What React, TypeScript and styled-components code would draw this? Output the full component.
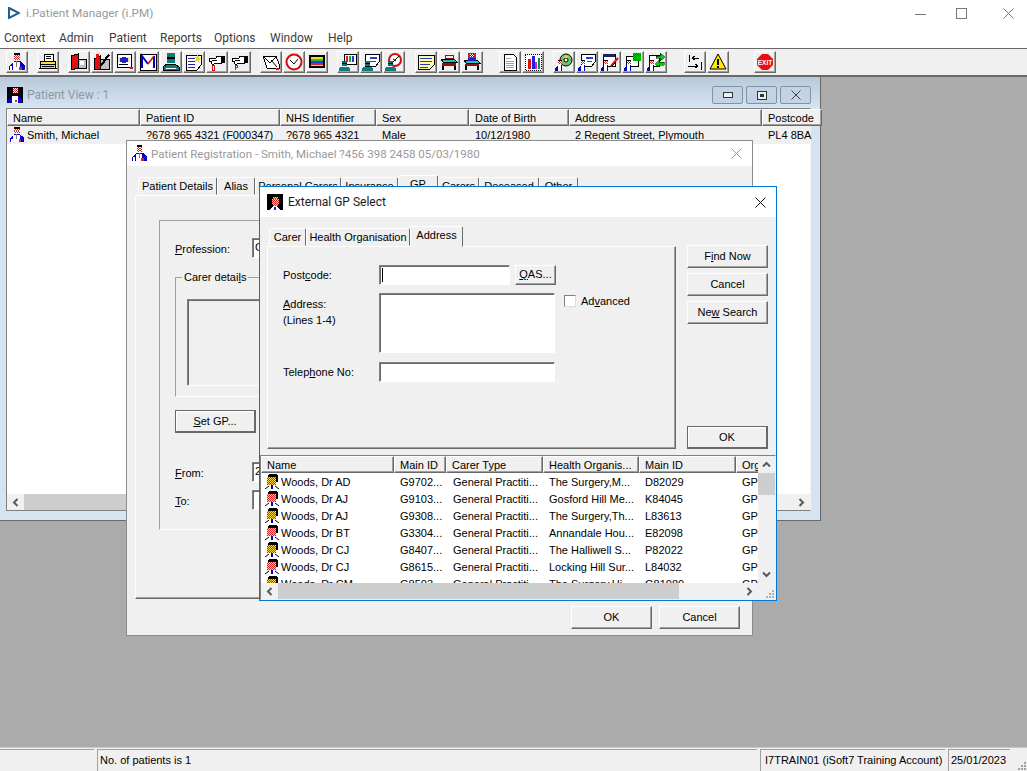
import React from 'react'
import styled, {createGlobalStyle, css} from 'styled-components'

const GlobalStyle = createGlobalStyle`
  html, body { margin: 0; padding: 0; background: #ababab; }
  * { box-sizing: border-box; }
`

const dlgFont = `'Liberation Sans', Arial, sans-serif`
const capFont = `Roboto, 'Noto Sans', sans-serif`

const raised = css`
  border: 1px solid;
  border-color: #fff #696969 #696969 #fff;
  box-shadow: inset -1px -1px 0 #a0a0a0;
`
const sunken = css`
  border: 1px solid;
  border-color: #808080 #fff #fff #808080;
  box-shadow: inset 1px 1px 0 #696969;
`

const Screen = styled.div`
  width: 1027px;
  height: 771px;
  display: flex;
  flex-direction: column;
  overflow: hidden;
  font-family: ${dlgFont};
  font-size: 11px;
  color: #000;
`

/* top of the main window */
const AppTitle = styled.div`
  height: 28px;
  flex: none;
  background: #fff;
  display: flex;
  align-items: center;
  padding: 0 0 2px 8px;
`
const AppTitleText = styled.span`
  margin-left: 6px;
  font-family: ${capFont};
  font-size: 11.8px;
  color: #999;
  flex: 1;
`
const WinButtons = styled.div`
  display: flex;
  width: 112px;
`
const WinGlyph = styled.div<{$left: number}>`
  margin-left: ${({$left}) => $left}px;
  height: 11px;
`
const MenuBar = styled.div`
  height: 20px;
  flex: none;
  background: #fff;
  display: flex;
  align-items: center;
  padding-left: 4px;
`
const MenuItem = styled.span<{$w: number}>`
  width: ${({$w}) => $w}px;
  font-family: ${capFont};
  font-size: 12px;
  color: #3c3c3c;
`
const Toolbar = styled.div`
  height: 29px;
  flex: none;
  display: flex;
  align-items: flex-start;
  padding: 2px 0 0 6px;
  background: #f0f0f0;
  border-top: 1px solid #696969;
  border-bottom: 2px solid #696969;
`
const ToolGroup = styled.div<{$gap: number}>`
  display: flex;
  gap: 1px;
  margin-left: ${({$gap}) => $gap}px;
`
const ToolButton = styled.div`
  width: 22px;
  height: 22px;
  ${raised}
  display: flex;
  align-items: center;
  justify-content: center;
`

const Desktop = styled.div`
  flex: 1;
  position: relative;
  background: #ababab;
`

/* mdi child */
const PatientWindow = styled.div`
  position: absolute;
  left: 0;
  top: 0;
  width: 821px;
  height: 444px;
  display: flex;
  flex-direction: column;
  padding: 0 9px 9px 6px;
  background: #d6e4f2;
  border-right: 1px solid #696969;
  border-bottom: 1px solid #696969;
`
const PatientCaption = styled.div`
  height: 31px;
  flex: none;
  margin: 0 -9px 0 -6px;
  padding: 5px 9px 0 7px;
  background: linear-gradient(to bottom, #b7c9da, #d7e4f2);
  display: flex;
  align-items: center;
  gap: 3px;
`
const PatientTitle = styled.span`
  flex: 1;
  margin-left: 1px;
  font-family: ${capFont};
  font-size: 12px;
  color: #8a99a6;
`
const MdiButton = styled.div`
  width: 31px;
  height: 18px;
  background: #c4d3e3;
  border: 1px solid #8193a9;
  border-radius: 2px;
  display: flex;
  align-items: center;
  justify-content: center;
`
const ListFrame = styled.div`
  flex: 1;
  min-height: 0;
  display: flex;
  flex-direction: column;
  background: #fff;
  border: 1px solid #808080;
  border-right-color: #f0f0f0;
`
const HeaderRow = styled.div<{$cols: string}>`
  display: grid;
  grid-template-columns: ${({$cols}) => $cols};
  height: 17px;
  flex: none;
`
const HeaderCell = styled.div`
  ${raised}
  background: #f0f0f0;
  padding-left: 5px;
  line-height: 16px;
  white-space: nowrap;
  overflow: hidden;
`
const DataRow = styled.div<{$cols: string; $h: number; $selected?: boolean}>`
  display: grid;
  grid-template-columns: ${({$cols}) => $cols};
  height: ${({$h}) => $h}px;
  flex: none;
  background: ${({$selected}) => ($selected ? '#f0f0f0' : '#fff')};
`
const DataCell = styled.div<{$pad?: number; $gap?: number}>`
  display: flex;
  align-items: center;
  gap: ${({$gap}) => $gap ?? 2}px;
  padding-left: ${({$pad}) => $pad ?? 6}px;
  white-space: nowrap;
  overflow: hidden;
`
const ListFill = styled.div`
  flex: 1;
  min-height: 0;
`
const HScroll = styled.div`
  height: 16px;
  flex: none;
  display: flex;
  align-items: stretch;
  background: #f0f0f0;
`
const ScrollArrow = styled.div<{$end?: boolean}>`
  width: 17px;
  flex: none;
  display: flex;
  align-items: center;
  justify-content: center;
  margin-left: ${({$end}) => ($end ? 'auto' : 0)};
`
const HThumb = styled.div<{$w: number}>`
  width: ${({$w}) => $w}px;
  background: #cdcdcd;
`

/* common dialog parts */
const Dialog = styled.div<{$x: number; $y: number; $w: number; $h: number; $active?: boolean}>`
  position: absolute;
  isolation: isolate;
  left: ${({$x}) => $x}px;
  top: ${({$y}) => $y}px;
  width: ${({$w}) => $w}px;
  height: ${({$h}) => $h}px;
  display: flex;
  flex-direction: column;
  background: #f0f0f0;
  border: 1px solid ${({$active}) => ($active ? '#0078d7' : '#8c8c8c')};
`
const Caption = styled.div<{$h: number; $left: number}>`
  height: ${({$h}) => $h}px;
  flex: none;
  background: #fff;
  display: flex;
  align-items: center;
  padding: 0 10px 0 ${({$left}) => $left}px;
`
const CaptionText = styled.span<{$active?: boolean}>`
  flex: 1;
  margin-left: ${({$active}) => ($active ? 5 : 3)}px;
  font-family: ${capFont};
  font-size: ${({$active}) => ($active ? 12 : 11.55)}px;
  color: ${({$active}) => ($active ? '#1a1a1a' : '#999')};
  white-space: nowrap;
`
const TabStrip = styled.div<{$left: number}>`
  display: flex;
  align-items: flex-end;
  padding-left: ${({$left}) => $left}px;
  position: relative;
  z-index: 1;
`
const Tab = styled.div<{$w: number; $active?: boolean}>`
  width: ${({$w}) => $w}px;
  height: ${({$active}) => ($active ? 21 : 18)}px;
  margin-bottom: ${({$active}) => ($active ? -1 : 0)}px;
  background: #f0f0f0;
  border: 1px solid;
  border-color: #fff #696969 transparent #fff;
  border-radius: 2px 2px 0 0;
  text-align: center;
  line-height: ${({$active}) => ($active ? 16 : 17)}px;
  white-space: nowrap;
`
const TabPanel = styled.div`
  ${raised}
  border-top-color: #fff;
`
const Button = styled.div<{$w?: number; $h?: number; $default?: boolean}>`
  width: ${({$w}) => $w ?? 81}px;
  height: ${({$h}) => $h ?? 23}px;
  flex: none;
  background: #f0f0f0;
  display: flex;
  align-items: center;
  justify-content: center;
  padding-bottom: 2px;
  ${raised}
  ${({$default}) =>
    $default &&
    css`
      padding-bottom: 0;
      border-color: #696969;
      border-bottom-width: 2px;
      border-right-width: 2px;
      box-shadow: inset 1px 1px 0 #fff;
    `}
`
const Field = styled.div<{$w: number; $h?: number}>`
  width: ${({$w}) => $w}px;
  height: ${({$h}) => $h ?? 20}px;
  flex: none;
  background: #fff;
  padding: 2px 0 0 2px;
  overflow: hidden;
  ${sunken}
`
const Caret = styled.div`
  width: 1px;
  height: 14px;
  background: #000;
`

/* patient registration */
const RegBody = styled.div`
  flex: 1;
  display: flex;
  flex-direction: column;
  padding: 9px 8px 5px 8px;
  min-height: 0;
`
const RegPanel = styled(TabPanel)`
  height: 404px;
  flex: none;
  padding: 24px 23px 0 23px;
`
const GpGroup = styled.div`
  height: 310px;
  border: 1px solid;
  border-color: #a0a0a0 #fff #fff #a0a0a0;
  padding: 17px 16px 0 15px;
`
const GpRow = styled.div<{$top?: number}>`
  display: flex;
  align-items: center;
  margin-top: ${({$top}) => $top ?? 0}px;
`
const GpLabel = styled.div`
  width: 77px;
  padding-top: 2px;
`
const CarerBox = styled.div`
  position: relative;
  height: 120px;
  margin-top: 19px;
  padding: 21px 30px 0 11px;
  border: 1px solid;
  border-color: #a0a0a0 #fff #fff #a0a0a0;
`
const CarerLegend = styled.span`
  position: absolute;
  top: -7px;
  left: 6px;
  padding: 0 2px;
  background: #f0f0f0;
`
const CarerList = styled.div`
  height: 87px;
  ${sunken}
`
const RegFooter = styled.div`
  display: flex;
  justify-content: flex-end;
  gap: 7px;
  padding: 7px 4px 0 0;
`

/* external gp */
const GpBody = styled.div`
  display: grid;
  grid-template-columns: 409px 81px;
  column-gap: 11px;
  padding: 9px 0 0 7px;
  height: 238px;
  flex: none;
`
const GpTabs = styled.div`
  display: flex;
  flex-direction: column;
  height: 223px;
`
const AddressPanel = styled(TabPanel)`
  flex: 1;
  display: grid;
  grid-template-columns: 96px 176px auto;
  grid-template-rows: 20px 61px 20px;
  row-gap: 8px;
  align-items: start;
  padding: 18px 0 0 15px;
`
const FormLabel = styled.div<{$center?: boolean}>`
  line-height: 16px;
  padding-top: ${({$center}) => ($center ? 2 : 3)}px;
`
const InlineFields = styled.div`
  display: flex;
  gap: 5px;
`
const CheckWrap = styled.div`
  display: flex;
  align-items: center;
  gap: 5px;
  margin: 2px 0 0 9px;
`
const CheckBox = styled.div`
  width: 12px;
  height: 12px;
  background: #fff;
  border: 1px solid;
  border-color: #808080 #ddd #ddd #808080;
`
const SideButtons = styled.div`
  display: flex;
  flex-direction: column;
  gap: 5px;
  padding-top: 19px;
  height: 223px;
`
const SideOk = styled(Button)`
  margin-top: auto;
`
const GpList = styled.div`
  flex: 1;
  min-height: 0;
  display: flex;
  flex-direction: column;
  border: 1px solid #808080;
  border-right-color: #f0f0f0;
  border-bottom-color: #f0f0f0;
  background: #fff;
`
const GpListMain = styled.div`
  flex: 1;
  min-height: 0;
  display: flex;
`
const GpListRows = styled.div`
  flex: 1;
  min-width: 0;
  overflow: hidden;
`
const VScroll = styled.div`
  width: 17px;
  flex: none;
  display: flex;
  flex-direction: column;
  background: #f0f0f0;
`
const VArrow = styled.div<{$end?: boolean}>`
  height: 17px;
  flex: none;
  display: flex;
  align-items: center;
  justify-content: center;
  margin-top: ${({$end}) => ($end ? 'auto' : 0)};
`
const VThumb = styled.div`
  height: 22px;
  background: #cdcdcd;
`
const Grip = styled.div`
  margin-left: 1px;
  width: 16px;
  display: flex;
  align-items: flex-end;
  justify-content: flex-end;
`

/* bottom bar */
const StatusBar = styled.div`
  height: 24px;
  flex: none;
  display: flex;
  gap: 3px;
  margin-left: -1px;
  background: #f0f0f0;
  padding-top: 1px;
  border-top: 1px solid #c8c8c8;
`
const StatusCell = styled.div<{$w: number; $pad?: number}>`
  width: ${({$w}) => $w}px;
  flex: none;
  border-top: 1px solid #a0a0a0;
  border-left: 1px solid #a0a0a0;
  padding: 4px 0 0 ${({$pad}) => $pad ?? 2}px;
  white-space: nowrap;
  overflow: hidden;
`
const StatusGrip = styled.div`
  flex: 1;
  display: flex;
  align-items: flex-end;
  justify-content: flex-end;
`

const Checker = ({x, y, n, m, a, b, s = 1}: {x: number; y: number; n: number; m: number; a: string; b: string; s?: number}) => (
  <>
    {Array.from({length: n * m}).map((_, i) => (
      <rect
        key={i}
        x={x + (i % n) * s}
        y={y + Math.floor(i / n) * s}
        width={s}
        height={s}
        fill={((i % n) + Math.floor(i / n)) % 2 ? a : b}
      />
    ))}
  </>
)

const Svg = ({size = 18, box = 18, children}: {size?: number; box?: number; children: React.ReactNode}) => (
  <svg width={size} height={size} viewBox={`0 0 ${box} ${box}`} shapeRendering="crispEdges" style={{display: 'block', flex: 'none'}}>
    {children}
  </svg>
)

// small patient figure, sits bottom left on a lot of the toolbar icons
const Patient = ({x = 0, y = 0}: {x?: number; y?: number}) => (
  <g transform={`translate(${x} ${y})`}>
    <rect x={3} y={0} width={4} height={1} fill="#000" />
    <Checker x={3} y={1} n={4} m={3} a="#e02020" b="#fff" />
    <path d="M0 11V8L3 5H7V11Z" fill="#0000c0" />
    <rect x={3} y={5} width={3} height={6} fill="#fff" />
  </g>
)

const Teal = ({x = 0, y = 0}: {x?: number; y?: number}) => (
  <g transform={`translate(${x} ${y})`}>
    <rect x={3} y={0} width={5} height={5} fill="#0f6f6f" />
    <rect x={3} y={2} width={5} height={1} fill="#000" />
    <path d="M0 10V7L2 6H9L11 7V10Z" fill="#0f7c7c" />
  </g>
)

const PatientIcon = ({size = 18}: {size?: number}) => (
  <Svg size={size}>
    <rect x={6} y={0} width={6} height={2} fill="#000" />
    <Checker x={6} y={2} n={6} m={5} a="#e02020" b="#fff" />
    <path d="M1 17V13L6 8H12L17 12V17Z" fill="#0000c8" />
    <path d="M5 9H12V17H5Z" fill="#fff" />
    <rect x={2} y={13} width={2} height={4} fill="#fff" />
    <rect x={11} y={14} width={3} height={3} fill="#e02020" />
    <rect x={8} y={8} width={1} height={6} fill="#808080" />
  </Svg>
)

const WindowPatientIcon = () => (
  <Svg size={16} box={16}>
    <rect width={16} height={16} fill="#000" />
    <Checker x={6} y={1} n={5} m={5} a="#e02020" b="#fff" />
    <path d="M1 16V13L5 9H11L15 13V16Z" fill="#0000c8" />
    <path d="M5 9H11V16H5Z" fill="#fff" />
    <rect x={8} y={13} width={2} height={2} fill="#e02020" />
  </Svg>
)

const GpWindowIcon = () => (
  <Svg size={16} box={16}>
    <rect width={16} height={16} fill="#000" />
    <Checker x={6} y={3} n={5} m={2} a="#e02020" b="#ffd040" />
    <Checker x={5} y={5} n={7} m={5} a="#e02020" b="#ffd040" />
    <Checker x={6} y={10} n={5} m={2} a="#e02020" b="#ffd040" />
    <path d="M3 16L6 12H10L13 16Z" fill="#fff" />
    <rect x={7} y={13} width={2} height={3} fill="#2020a0" />
  </Svg>
)

const GpPersonIcon = () => (
  <Svg size={15} box={15}>
    <path d="M3 1L5 0H11L13 2V8H11V3H4V4H3Z" fill="#000" />
    <Checker x={2} y={3} n={9} m={8} a="#e02020" b="#ffd840" />
    <path d="M0 15L4 12M14 15L10 12" stroke="#000" fill="none" shapeRendering="auto" />
    <rect x={6} y={11} width={2} height={4} fill="#0000d0" />
  </Svg>
)

const BookIcon = () => (
  <Svg>
    <path d="M1 3L8 1V15L1 17Z" fill="#e01010" stroke="#000" />
    <path d="M8 6H16V15H8Z" fill="#c0c0c0" stroke="#000" />
    <rect x={10} y={8} width={4} height={4} fill="#fff" />
  </Svg>
)

const Hand = () => (
  <>
    <path d="M1 5H8L9 3H13V10H8L6 11H4L3 8H1Z" fill="#fff" stroke="#000" />
    <path d="M4 7H9" stroke="#000" />
    <rect x={13} y={3} width={4} height={7} fill="#000" />
  </>
)

const icons: Record<string, React.ReactNode> = {
  patient: <PatientIcon />,
  typewriter: (
    <Svg>
      <rect x={5} y={1} width={9} height={8} fill="#fff" stroke="#000" />
      <rect x={7} y={3} width={5} height={1} fill="#000" />
      <rect x={7} y={5} width={5} height={1} fill="#000" />
      <path d="M2 8H16L17 15H1Z" fill="#f4e040" stroke="#000" />
      <rect x={2} y={11} width={14} height={1} fill="#000" />
      <rect x={3} y={13} width={12} height={1} fill="#000" />
    </Svg>
  ),
  book: <BookIcon />,
  notebook: (
    <Svg>
      <path d="M1 6L7 3V16L1 17Z" fill="#e01010" stroke="#000" />
      <path d="M7 6H16V16H7Z" fill="#c0c0c0" stroke="#000" />
      <path d="M7 12L15 1L17 2L9 13Z" fill="#000" />
      <rect x={3} y={1} width={3} height={4} fill="#e01010" />
    </Svg>
  ),
  eyecard: (
    <Svg>
      <rect x={1} y={1} width={14} height={13} fill="#fff" stroke="#000" />
      <rect x={2} y={4} width={12} height={5} fill="#e8e8a0" />
      <ellipse cx={8} cy={7} rx={4} ry={3} fill="#2020c0" />
      <rect x={3} y={11} width={9} height={1} fill="#000" />
      <rect x={14} y={14} width={3} height={2} fill="#e01010" />
    </Svg>
  ),
  mail: (
    <Svg>
      <rect x={1} y={1} width={16} height={16} fill="#fff" stroke="#000" />
      <path d="M3 15V3L9 11" fill="none" stroke="#0000d0" strokeWidth={2} shapeRendering="auto" />
      <path d="M15 3V15" fill="none" stroke="#0000d0" strokeWidth={2} />
      <path d="M9 11L15 3" stroke="#e01010" strokeWidth={1.5} shapeRendering="auto" />
    </Svg>
  ),
  surgeon: (
    <Svg>
      <rect x={5} y={0} width={8} height={4} fill="#0f7c7c" />
      <rect x={5} y={4} width={8} height={2} fill="#000" />
      <rect x={5} y={6} width={8} height={4} fill="#0f7c7c" />
      <path d="M1 17V14L5 11H13L17 14V17Z" fill="#0f7c7c" stroke="#000" />
      <rect x={4} y={15} width={10} height={1} fill="#fff" />
    </Svg>
  ),
  starnote: (
    <Svg>
      <path d="M1 2H16V12L12 17H1Z" fill="#fff" stroke="#000" />
      <path d="M3 5H10M3 8H10M3 11H10M3 14H10" stroke="#2020c0" />
      <path d="M13 1L14 5H17L14 7L15 10L12 8L10 9L11 6L9 4H12Z" fill="#f4d020" />
    </Svg>
  ),
  handD: (
    <Svg>
      <Hand />
      <path d="M4 12V17M4 12H6V17H4" fill="none" stroke="#e01010" />
    </Svg>
  ),
  handP: (
    <Svg>
      <Hand />
      <path d="M4 17V12H6V14H4" fill="none" stroke="#e01010" />
    </Svg>
  ),
  envelope: (
    <Svg>
      <path d="M1 3H14L17 11V15H5Z" fill="#fff" stroke="#000" />
      <path d="M2 4L8 10L14 4M9 7L15 14" fill="none" stroke="#000" shapeRendering="auto" />
      <rect x={14} y={15} width={3} height={2} fill="#e01010" />
    </Svg>
  ),
  clock: (
    <Svg>
      <circle cx={9} cy={9} r={7.5} fill="#fff" stroke="#d01010" strokeWidth={2} shapeRendering="auto" />
      <path d="M5 7L9 11L13 6" fill="none" stroke="#000" shapeRendering="auto" />
    </Svg>
  ),
  rainbow: (
    <Svg>
      <rect x={1} y={2} width={16} height={13} fill="#000" />
      <rect x={3} y={4} width={12} height={2} fill="#f4e020" />
      <rect x={3} y={6} width={12} height={2} fill="#20c040" />
      <rect x={3} y={8} width={12} height={2} fill="#2040e0" />
      <rect x={3} y={10} width={12} height={2} fill="#e02020" />
      <rect x={3} y={12} width={12} height={1} fill="#f4e020" />
    </Svg>
  ),
  monitor: (
    <Svg>
      <rect x={5} y={1} width={12} height={10} fill="#fff" stroke="#000" />
      <rect x={7} y={3} width={2} height={6} fill="#e02020" />
      <rect x={10} y={3} width={2} height={6} fill="#20a040" />
      <rect x={13} y={3} width={2} height={6} fill="#2040e0" />
      <Teal x={0} y={8} />
    </Svg>
  ),
  form: (
    <Svg>
      <path d="M3 1H17V9L14 13H3Z" fill="#fff" stroke="#000" />
      <rect x={8} y={4} width={7} height={2} fill="#2040e0" />
      <rect x={8} y={8} width={6} height={1} fill="#2040e0" />
      <Teal x={0} y={8} />
    </Svg>
  ),
  noclock: (
    <Svg>
      <circle cx={10} cy={7} r={6} fill="#fff" stroke="#d01010" strokeWidth={2} shapeRendering="auto" />
      <path d="M6 11L14 3M8 6L11 8" stroke="#000" shapeRendering="auto" />
      <Teal x={0} y={8} />
    </Svg>
  ),
  yellownote: (
    <Svg>
      <path d="M1 2H17V12L13 16H1Z" fill="#fff8a0" stroke="#000" />
      <path d="M3 5H15M3 8H15M3 11H13M3 14H11" stroke="#2040c0" />
    </Svg>
  ),
  bed: (
    <Svg>
      <path d="M5 2H13V5H5Z" fill="none" stroke="#901010" />
      <path d="M1 6H14L17 9H3Z" fill="#20c0c0" stroke="#000" />
      <rect x={2} y={10} width={14} height={3} fill="#901010" />
      <rect x={2} y={13} width={2} height={4} fill="#000" />
      <rect x={14} y={13} width={2} height={4} fill="#000" />
    </Svg>
  ),
  bedperson: (
    <Svg>
      <rect x={5} y={0} width={8} height={5} fill="#d02020" />
      <Checker x={7} y={1} n={4} m={3} a="#2020c0" b="#fff" />
      <path d="M1 7H14L17 10H3Z" fill="#20c0c0" stroke="#000" />
      <rect x={5} y={5} width={8} height={3} fill="#2020c0" />
      <rect x={2} y={11} width={14} height={2} fill="#901010" />
      <rect x={2} y={13} width={2} height={4} fill="#000" />
      <rect x={14} y={13} width={2} height={4} fill="#000" />
    </Svg>
  ),
  document: (
    <Svg>
      <path d="M3 1H12L15 4V17H3Z" fill="#fff" stroke="#000" />
      <path d="M5 5H10M5 8H13M5 10H13M5 12H13M5 14H13" stroke="#a0a0a0" />
    </Svg>
  ),
  chart: (
    <Svg>
      <rect x={1} y={1} width={16} height={16} fill="#fff" stroke="#000" strokeDasharray="1 1" />
      <rect x={4} y={6} width={3} height={10} fill="#e01010" />
      <rect x={8} y={3} width={3} height={13} fill="#2020e0" />
      <rect x={11} y={9} width={2} height={7} fill="#e020c0" />
      <rect x={14} y={5} width={2} height={11} fill="#109040" />
    </Svg>
  ),
  disc: (
    <Svg>
      <circle cx={11} cy={7} r={6} fill="#70c070" stroke="#000" shapeRendering="auto" />
      <circle cx={11} cy={7} r={2} fill="#fff" stroke="#000" shapeRendering="auto" />
      <path d="M11 1L14 5H8Z" fill="#e0d040" />
      <Patient x={0} y={7} />
    </Svg>
  ),
  patientform: (
    <Svg>
      <path d="M3 1H17V9L14 13H3Z" fill="#fff" stroke="#000" />
      <rect x={8} y={4} width={7} height={2} fill="#2040e0" />
      <rect x={9} y={8} width={5} height={1} fill="#2040e0" />
      <Patient x={0} y={7} />
    </Svg>
  ),
  patientsign: (
    <Svg>
      <rect x={2} y={1} width={12} height={12} fill="#fff" stroke="#000" />
      <rect x={2} y={1} width={12} height={3} fill="#202060" />
      <path d="M10 13L17 5" stroke="#e01010" strokeWidth={2} shapeRendering="auto" />
      <path d="M11 13L15 9" stroke="#000" />
      <Patient x={0} y={7} />
    </Svg>
  ),
  patientglobe: (
    <Svg>
      <rect x={2} y={3} width={12} height={10} fill="#fff" stroke="#000" />
      <Checker x={9} y={0} n={8} m={8} a="#008000" b="#00d000" />
      <Patient x={0} y={7} />
    </Svg>
  ),
  patientarrows: (
    <Svg>
      <rect x={2} y={2} width={10} height={11} fill="#fff" stroke="#000" />
      <path d="M9 3H13V0L18 4L13 8V5H9Z" fill="#00d000" stroke="#000" strokeWidth={0.5} />
      <path d="M17 9H12V7L8 11L12 14V12H17Z" fill="#00d000" stroke="#000" strokeWidth={0.5} />
      <Patient x={0} y={7} />
    </Svg>
  ),
  transfer: (
    <Svg>
      <path d="M3 2V9M13 5H6M6 5L9 3M6 5L9 7" fill="none" stroke="#000" />
      <path d="M15 9V17M2 13H12M12 13L9 11M12 13L9 15" fill="none" stroke="#000" />
    </Svg>
  ),
  warning: (
    <Svg>
      <path d="M9 1L17 16H1Z" fill="#ffe800" stroke="#000" shapeRendering="auto" />
      <rect x={8} y={6} width={2} height={6} fill="#000" />
      <rect x={8} y={13} width={2} height={2} fill="#000" />
    </Svg>
  ),
  exit: (
    <Svg>
      <path d="M6 1H12L17 6V12L12 17H6L1 12V6Z" fill="#e81010" shapeRendering="auto" />
      <text x={9} y={11.5} textAnchor="middle" fontSize={6.5} fontWeight={700} fontFamily="'Liberation Sans', sans-serif" fill="#fff">
        EXIT
      </text>
    </Svg>
  ),
}

const toolGroups = [
  {gap: 0, items: ['patient']},
  {gap: 9, items: ['typewriter']},
  {gap: 9, items: ['book', 'notebook', 'eyecard', 'mail', 'surgeon', 'starnote', 'handD', 'handP']},
  {gap: 9, items: ['envelope', 'clock', 'rainbow']},
  {gap: 9, items: ['monitor', 'form', 'noclock']},
  {gap: 10, items: ['yellownote', 'bed', 'bedperson']},
  {gap: 16, items: ['document', 'chart']},
  {gap: 9, items: ['disc', 'patientform', 'patientsign', 'patientglobe', 'patientarrows']},
  {gap: 17, items: ['transfer', 'warning']},
  {gap: 25, items: ['exit']},
]

const menus: [string, number][] = [
  ['Context', 55],
  ['Admin', 50],
  ['Patient', 51],
  ['Reports', 54],
  ['Options', 56],
  ['Window', 58],
  ['Help', 40],
]

const patientCols = '133px 140px 96px 93px 100px 193px 60px'
const patientHeads = ['Name', 'Patient ID', 'NHS Identifier', 'Sex', 'Date of Birth', 'Address', 'Postcode']
const patientCells = ['?678 965 4321 (F000347)', '?678 965 4321', 'Male', '10/12/1980', '2 Regent Street, Plymouth', 'PL4 8BA']

const regTabs: [string, number, boolean?][] = [
  ['Patient Details', 79],
  ['Alias', 38],
  ['Personal Carers', 86],
  ['Insurance', 57],
  ['GP', 40, true],
  ['Carers', 41],
  ['Deceased', 60],
  ['Other', 39],
]

const gpCols = '133px 52px 97px 96px 97px 60px'
const gpHeads = ['Name', 'Main ID', 'Carer Type', 'Health Organis...', 'Main ID', 'Organisation']
const gpRows = [
  ['Woods, Dr AD', 'G9702...', 'The Surgery,M...', 'D82029'],
  ['Woods, Dr AJ', 'G9103...', 'Gosford Hill Me...', 'K84045'],
  ['Woods, Dr AJ', 'G9308...', 'The Surgery,Th...', 'L83613'],
  ['Woods, Dr BT', 'G3304...', 'Annandale Hou...', 'E82098'],
  ['Woods, Dr CJ', 'G8407...', 'The Halliwell S...', 'P82022'],
  ['Woods, Dr CJ', 'G8615...', 'Locking Hill Sur...', 'L84032'],
  ['Woods, Dr CM', 'G8503...', 'The Surgery,Hi...', 'G81080'],
]

const Chevron = ({dir}: {dir: 'left' | 'right' | 'up' | 'down'}) => {
  const rotate = {left: 0, up: 90, right: 180, down: 270}[dir]
  return (
    <svg width={9} height={9} viewBox="0 0 9 9" style={{transform: `rotate(${rotate}deg)`}}>
      <path d="M6.5 1L3 4.5L6.5 8" fill="none" stroke="#5a5a5a" strokeWidth={2} />
    </svg>
  )
}

const CloseGlyph = ({color, size = 11}: {color: string; size?: number}) => (
  <svg width={size} height={size} viewBox="0 0 11 11" style={{display: 'block'}}>
    <path d="M0.5 0.5L10.5 10.5M10.5 0.5L0.5 10.5" stroke={color} fill="none" />
  </svg>
)

const GripDots = ({color}: {color: string}) => (
  <svg width={12} height={10} viewBox="0 0 12 10" shapeRendering="crispEdges">
    {[
      [9, 1],
      [6, 4],
      [9, 4],
      [3, 7],
      [6, 7],
      [9, 7],
    ].map(([x, y]) => (
      <rect key={`${x}-${y}`} x={x} y={y} width={2} height={2} fill={color} />
    ))}
  </svg>
)

const App = () => (
  <Screen>
    <GlobalStyle />
    <AppTitle>
      <svg width={12} height={12} viewBox="0 0 12 12">
        <path d="M1 1L11 6L1 11Z" fill="none" stroke="#1f5f94" strokeWidth={2} />
      </svg>
      <AppTitleText>i.Patient Manager (i.PM)</AppTitleText>
      <WinButtons>
        <WinGlyph $left={0}>
          <svg width={11} height={11} viewBox="0 0 11 11" style={{display: 'block'}}>
            <path d="M0 6.5H11" stroke="#777" />
          </svg>
        </WinGlyph>
        <WinGlyph $left={30}>
          <svg width={11} height={11} viewBox="0 0 11 11" style={{display: 'block'}}>
            <rect x={0.5} y={0.5} width={10} height={10} fill="none" stroke="#777" />
          </svg>
        </WinGlyph>
        <WinGlyph $left={36}>
          <CloseGlyph color="#777" />
        </WinGlyph>
      </WinButtons>
    </AppTitle>
    <MenuBar>
      {menus.map(([label, w]) => (
        <MenuItem key={label} $w={w}>
          {label}
        </MenuItem>
      ))}
    </MenuBar>
    <Toolbar>
      {toolGroups.map((group, i) => (
        <ToolGroup key={i} $gap={group.gap}>
          {group.items.map(name => (
            <ToolButton key={name}>{icons[name]}</ToolButton>
          ))}
        </ToolGroup>
      ))}
    </Toolbar>

    <Desktop>
      <PatientWindow>
        <PatientCaption>
          <WindowPatientIcon />
          <PatientTitle>Patient View : 1</PatientTitle>
          <MdiButton>
            <svg width={10} height={6} viewBox="0 0 10 6">
              <rect x={0.5} y={0.5} width={9} height={5} fill="#e8eef5" stroke="#333" />
            </svg>
          </MdiButton>
          <MdiButton>
            <svg width={10} height={9} viewBox="0 0 10 9">
              <rect x={0.5} y={0.5} width={9} height={8} fill="#e8eef5" stroke="#333" />
              <rect x={3} y={3} width={4} height={3} fill="#333" />
            </svg>
          </MdiButton>
          <MdiButton>
            <CloseGlyph color="#333" size={10} />
          </MdiButton>
        </PatientCaption>
        <ListFrame>
          <HeaderRow $cols={patientCols}>
            {patientHeads.map(head => (
              <HeaderCell key={head}>{head}</HeaderCell>
            ))}
          </HeaderRow>
          <DataRow $cols={patientCols} $h={18} $selected>
            <DataCell $pad={2}>
              <PatientIcon size={16} />
              Smith, Michael
            </DataCell>
            {patientCells.map(cell => (
              <DataCell key={cell}>{cell}</DataCell>
            ))}
          </DataRow>
          <ListFill />
          <HScroll>
            <ScrollArrow>
              <Chevron dir="left" />
            </ScrollArrow>
            <HThumb $w={480} />
            <ScrollArrow $end>
              <Chevron dir="right" />
            </ScrollArrow>
          </HScroll>
        </ListFrame>
      </PatientWindow>

      <Dialog $x={126} $y={63} $w={627} $h={496}>
        <Caption $h={25} $left={4}>
          <PatientIcon size={17} />
          <CaptionText>Patient Registration - Smith, Michael ?456 398 2458 05/03/1980</CaptionText>
          <CloseGlyph color="#999" />
        </Caption>
        <RegBody>
          <TabStrip $left={3}>
            {regTabs.map(([label, w, active]) => (
              <Tab key={label} $w={w} $active={active}>
                {label}
              </Tab>
            ))}
          </TabStrip>
          <RegPanel>
            <GpGroup>
              <GpRow>
                <GpLabel>
                  <u>P</u>rofession:
                </GpLabel>
                <Field $w={300}>GP</Field>
              </GpRow>
              <CarerBox>
                <CarerLegend>
                  Carer detai<u>l</u>s
                </CarerLegend>
                <CarerList />
              </CarerBox>
              <GpRow $top={13}>
                <Button $default>
                  <span>
                    <u>S</u>et GP...
                  </span>
                </Button>
              </GpRow>
              <GpRow $top={29}>
                <GpLabel>
                  <u>F</u>rom:
                </GpLabel>
                <Field $w={90}>25/01/2023</Field>
              </GpRow>
              <GpRow $top={8}>
                <GpLabel>
                  <u>T</u>o:
                </GpLabel>
                <Field $w={90} />
              </GpRow>
            </GpGroup>
          </RegPanel>
          <RegFooter>
            <Button>OK</Button>
            <Button>Cancel</Button>
          </RegFooter>
        </RegBody>
      </Dialog>

      <Dialog $x={259} $y={109} $w={518} $h={415} $active>
        <Caption $h={30} $left={7}>
          <GpWindowIcon />
          <CaptionText $active>External GP Select</CaptionText>
          <CloseGlyph color="#111" />
        </Caption>
        <GpBody>
          <GpTabs>
            <TabStrip $left={2}>
              <Tab $w={37}>Carer</Tab>
              <Tab $w={104}>Health Organisation</Tab>
              <Tab $w={53} $active>
                Address
              </Tab>
            </TabStrip>
            <AddressPanel>
              <FormLabel $center>
                Post<u>c</u>ode:
              </FormLabel>
              <InlineFields>
                <Field $w={131}>
                  <Caret />
                </Field>
                <Button $w={41} $h={20}>
                  <span>
                    <u>Q</u>AS...
                  </span>
                </Button>
              </InlineFields>
              <span />
              <FormLabel>
                <u>A</u>ddress:
                <br />
                (Lines 1-4)
              </FormLabel>
              <Field $w={176} $h={60} />
              <CheckWrap>
                <CheckBox />
                <span>
                  Ad<u>v</u>anced
                </span>
              </CheckWrap>
              <FormLabel $center>
                Telep<u>h</u>one No:
              </FormLabel>
              <Field $w={176} />
            </AddressPanel>
          </GpTabs>
          <SideButtons>
            <Button>
              <span>
                F<u>i</u>nd Now
              </span>
            </Button>
            <Button>Cancel</Button>
            <Button>
              <span>
                Ne<u>w</u> Search
              </span>
            </Button>
            <SideOk $default>OK</SideOk>
          </SideButtons>
        </GpBody>
        <GpList>
          <GpListMain>
            <GpListRows>
              <HeaderRow $cols={gpCols}>
                {gpHeads.map((head, i) => (
                  <HeaderCell key={i}>{head}</HeaderCell>
                ))}
              </HeaderRow>
              {gpRows.map(([name, mainId, org, orgId], i) => (
                <DataRow key={i} $cols={gpCols} $h={17}>
                  <DataCell $pad={4} $gap={1}>
                    <GpPersonIcon />
                    {name}
                  </DataCell>
                  <DataCell>{mainId}</DataCell>
                  <DataCell $pad={7}>General Practiti...</DataCell>
                  <DataCell>{org}</DataCell>
                  <DataCell>{orgId}</DataCell>
                  <DataCell>GP</DataCell>
                </DataRow>
              ))}
            </GpListRows>
            <VScroll>
              <VArrow>
                <Chevron dir="up" />
              </VArrow>
              <VThumb />
              <VArrow $end>
                <Chevron dir="down" />
              </VArrow>
            </VScroll>
          </GpListMain>
          <HScroll>
            <ScrollArrow>
              <Chevron dir="left" />
            </ScrollArrow>
            <HThumb $w={401} />
            <ScrollArrow $end>
              <Chevron dir="right" />
            </ScrollArrow>
            <Grip>
              <GripDots color="#b0b0b0" />
            </Grip>
          </HScroll>
        </GpList>
      </Dialog>
    </Desktop>

    <StatusBar>
      <StatusCell $w={95} />
      <StatusCell $w={660}>No. of patients is 1</StatusCell>
      <StatusCell $w={185} $pad={4}>
        I7TRAIN01 (iSoft7 Training Account)
      </StatusCell>
      <StatusCell $w={62}>25/01/2023</StatusCell>
      <StatusGrip>
        <GripDots color="#a0a0a0" />
      </StatusGrip>
    </StatusBar>
  </Screen>
)

export default App
